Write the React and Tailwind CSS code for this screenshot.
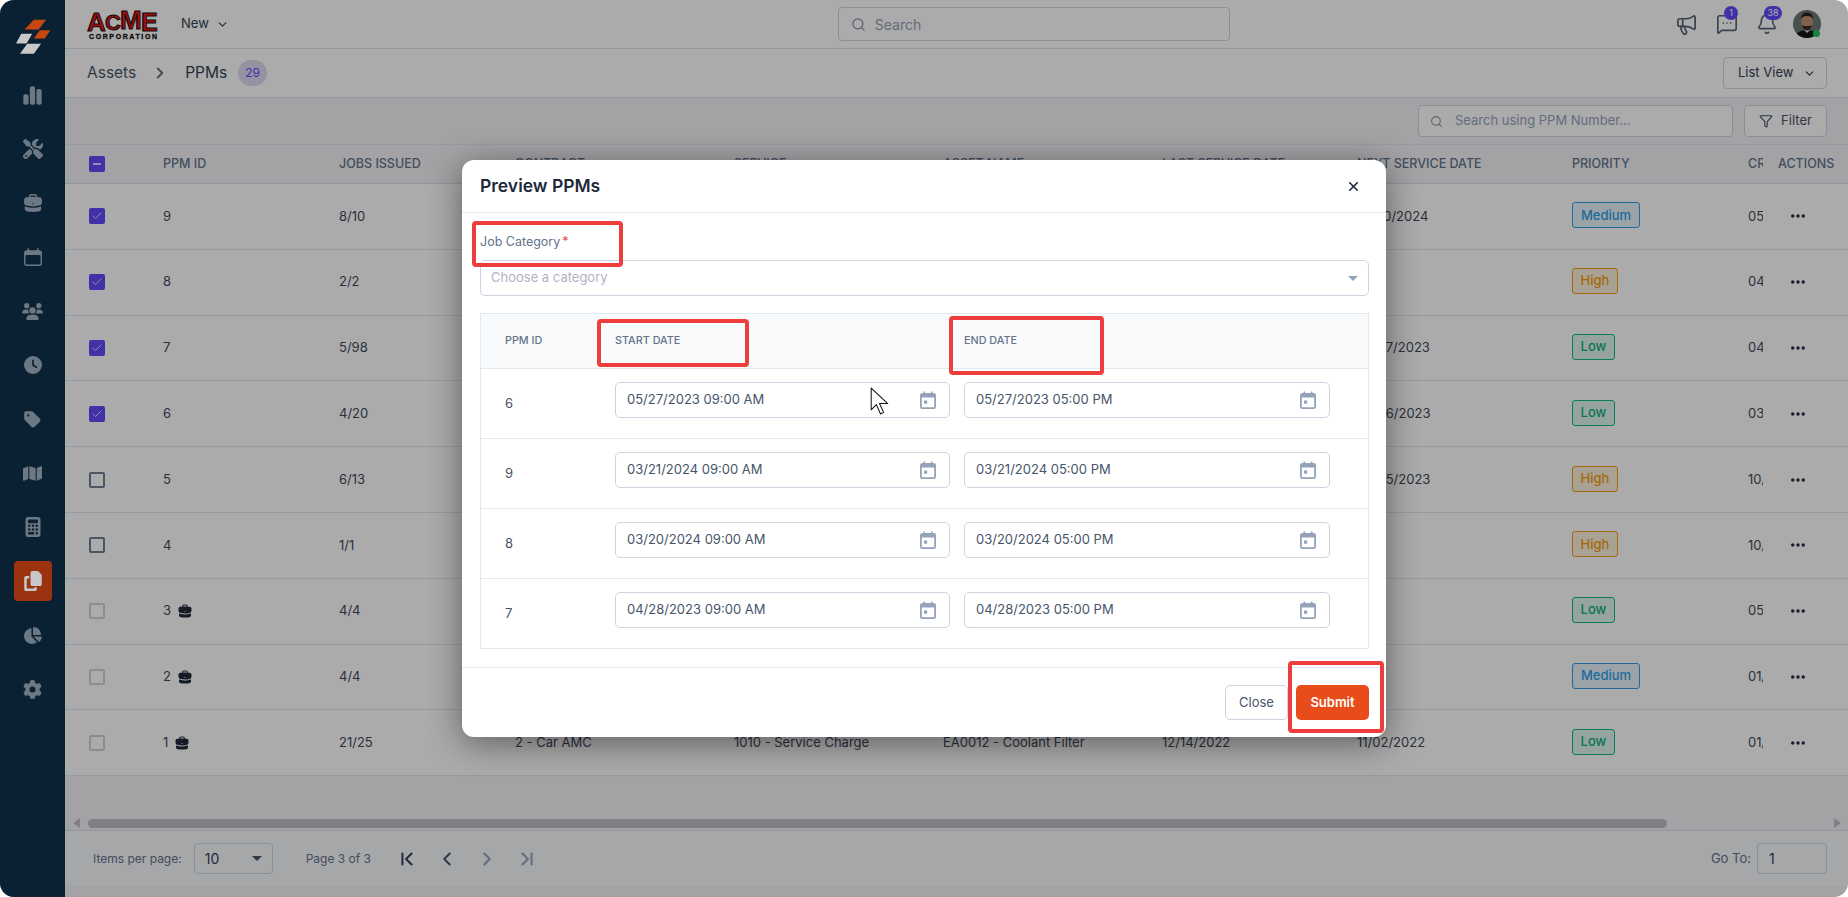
import React from "react";
import { Search, ChevronDown, ChevronRight, ChevronLeft, ChevronFirst, ChevronLast, Megaphone, MessageSquareMore, Bell, Funnel, Ellipsis, X, Check, Minus } from "lucide-react";
import { FaChartSimple, FaScrewdriverWrench, FaUsers, FaClock, FaTag, FaMap, FaCalculator, FaCopy, FaChartPie, FaGear } from "react-icons/fa6";
import { HiBriefcase, HiCalendar } from "react-icons/hi2";

const navItems = [
  { icon: FaChartSimple, size: 21 },
  { icon: FaScrewdriverWrench, size: 20 },
  { icon: HiBriefcase, size: 22 },
  { icon: HiCalendar, size: 22 },
  { icon: FaUsers, size: 21 },
  { icon: FaClock, size: 18 },
  { icon: FaTag, size: 19 },
  { icon: FaMap, size: 19 },
  { icon: FaCalculator, size: 20 },
  { icon: FaCopy, size: 20, active: true },
  { icon: FaChartPie, size: 19 },
  { icon: FaGear, size: 19 },
];

const rows = [
  { id: "9", jobs: "8/10", next: "03/10/2024", priority: "Medium", created: "05/10/2023", check: "on" },
  { id: "8", jobs: "2/2", next: "", priority: "High", created: "04/28/2023", check: "on" },
  { id: "7", jobs: "5/98", next: "05/27/2023", priority: "Low", created: "04/28/2023", check: "on" },
  { id: "6", jobs: "4/20", next: "05/26/2023", priority: "Low", created: "03/20/2023", check: "on" },
  { id: "5", jobs: "6/13", next: "05/25/2023", priority: "High", created: "10/20/2022", check: "off" },
  { id: "4", jobs: "1/1", next: "", priority: "High", created: "10/20/2022", check: "off" },
  { id: "3", jobs: "4/4", next: "", priority: "Low", created: "05/12/2022", check: "disabled", job: true },
  { id: "2", jobs: "4/4", next: "", priority: "Medium", created: "01/12/2022", check: "disabled", job: true },
  {
    id: "1",
    jobs: "21/25",
    contract: "2 - Car AMC",
    service: "1010 - Service Charge",
    asset: "EA0012 - Coolant Filter",
    last: "12/14/2022",
    next: "11/02/2022",
    priority: "Low",
    created: "01/12/2022",
    check: "disabled",
    job: true,
  },
];

const previewRows = [
  { id: "6", start: "05/27/2023 09:00 AM", end: "05/27/2023 05:00 PM" },
  { id: "9", start: "03/21/2024 09:00 AM", end: "03/21/2024 05:00 PM" },
  { id: "8", start: "03/20/2024 09:00 AM", end: "03/20/2024 05:00 PM" },
  { id: "7", start: "04/28/2023 09:00 AM", end: "04/28/2023 05:00 PM" },
];

const tableCols = "grid grid-cols-[74px_176px_176px_219px_209px_219px_195px_215px_176px_30px_1fr] items-center pl-[24px]";

const priorityStyles = {
  Medium: "w-[68px] border-[#2f9fe8] bg-[#e6f3fb] text-[#2f9fe8]",
  High: "w-[46px] border-[#f59e0b] bg-[#fdf0dc] text-[#f59e0b]",
  Low: "w-[43px] border-[#12b886] bg-[#e0f5ee] text-[#0fae7e]",
};

// sits above the dim layer, the reference keeps it brighter than the rest
const Logo = () => (
  <svg viewBox="40 50 115 112" className="relative z-10 w-[38px] h-[37px]">
    <polygon points="100,55 137,55 115,85 72,85" fill="#c6470f" />
    <polygon points="118,87 150,87 133,112 100,112" fill="#c6470f" />
    <polygon points="62,98 95,98 78,127 46,127" fill="#c9c9c9" />
    <polygon points="80,128 122,128 100,158 58,158" fill="#c9c9c9" />
  </svg>
);

const acmeLetters = [
  { ch: "A", x: 0, y: 23, size: 26 },
  { ch: "C", x: 18, y: 22, size: 22 },
  { ch: "M", x: 33, y: 21, size: 26 },
  { ch: "E", x: 54, y: 23, size: 25 },
];

const AcmeLogo = () => (
  <svg viewBox="0 0 72 32" className="w-[72px] h-[32px]">
    {acmeLetters.map((l) => (
      <text key={l.ch} x={l.x} y={l.y} fill="#ee1414" stroke="#111" strokeWidth="1" fontFamily="Liberation Sans" fontWeight="700" fontSize={l.size}>{l.ch}</text>
    ))}
    <text x="2" y="31" textLength="68" lengthAdjust="spacing" fill="#111" stroke="#111" strokeWidth="0.3" fontFamily="Liberation Sans" fontWeight="700" fontSize="7">CORPORATION</text>
  </svg>
);

const Avatar = () => (
  <svg viewBox="0 0 28 28" className="w-[28px] h-[28px] rounded-full">
    <rect width="28" height="28" fill="#6d7a72" />
    <path d="M2 28c1-6 6-8 12-8s11 2 12 8z" fill="#14161a" />
    <path d="M11 20l3 3 3-3-3-1z" fill="#dfe0e0" />
    <ellipse cx="14" cy="12" rx="6" ry="7.5" fill="#c08f72" />
    <path d="M8 9c0-5 3-6.500 6-6.500S20 4 20 9c-1-2-3-3-6-3s-5 1-6 3z" fill="#2a211c" />
    <path d="M9 15c1 4 3 5.500 5 5.500s4-1.500 5-5.500c-1 1-3 1-5 1s-4 0-5-1z" fill="#3d2e26" />
  </svg>
);

const CalendarIcon = () => (
  <svg viewBox="0 0 16 18" className="w-[16px] h-[18px] text-[#94a3b8]" fill="none">
    <rect x="0.9" y="2.9" width="14.2" height="14.2" rx="1.4" stroke="currentColor" strokeWidth="1.8" />
    <rect x="1" y="3" width="14" height="3.500" fill="currentColor" />
    <rect x="3.500" y="0.5" width="1.600" height="3" fill="currentColor" />
    <rect x="10.900" y="0.5" width="1.600" height="3" fill="currentColor" />
    <rect x="4" y="9.500" width="3.200" height="3.200" fill="currentColor" />
  </svg>
);

const Cursor = () => (
  <svg viewBox="0 0 19 28" className="absolute left-[408px] top-[227px] w-[20px] h-[29px]">
    <path d="M1 1v21l5-5 4 9 3-1.500-4-8.500h8z" fill="#fff" stroke="#111" strokeWidth="1" strokeLinejoin="round" />
  </svg>
);

const RowCheckbox = ({ state }) => {
  if (state === "on") {
    return (
      <span className="w-[16px] h-[16px] rounded-[2px] bg-[#6149fb] flex items-center justify-center">
        <Check size={12} strokeWidth={1.5} className="text-white" />
      </span>
    );
  }
  if (state === "off") {
    return <span className="block w-[16px] h-[16px] rounded-[2px] border-2 border-[#708096]" />;
  }
  return <span className="block w-[16px] h-[16px] rounded-[2px] border-2 border-[#cfd1d4]" />;
};

const Sidebar = () => (
  <aside className="w-[65px] shrink-0 bg-[#0f324c] flex flex-col items-center pt-[18px]">
    <Logo />
    <div className="flex flex-col items-center mt-[13px]">
      {navItems.map(({ icon: Icon, size, active }, i) => (
        <div
          key={i}
          className={`w-[38px] flex items-center justify-center ${active ? "h-[40px] my-[7px] rounded-[4px] bg-[#e84c1a] text-[#c8c8c8]" : "h-[54px] text-[#a2b4c4]"}`}
        >
          <Icon size={size} className={active ? "relative z-10" : ""} />
        </div>
      ))}
    </div>
  </aside>
);

const TopBar = () => (
  <header className="h-[49px] shrink-0 bg-white border-b border-[#dbe2ee] flex items-center pl-[22px] pr-[27px]">
    <AcmeLogo />
    <button className="ml-[22px] flex items-center gap-[7px] text-[13px] text-[#334155]">
      New
      <ChevronDown size={13} />
    </button>
    <div className="ml-[609px] w-[392px] h-[34px] border border-[#cbd5e1] rounded-[4px] flex items-center pl-[12px] text-[14px] text-[#94a3b8]">
      <Search size={15} className="text-[#8492a6]" />
      <span className="ml-[9px]">Search</span>
    </div>
    <div className="ml-auto flex items-center">
      <Megaphone size={23} strokeWidth={1.8} className="text-[#556479]" />
      <div className="relative ml-[18px]">
        <MessageSquareMore size={22} strokeWidth={1.8} className="text-[#556479]" />
        <span className="absolute -top-[7px] left-[8px] w-[14px] h-[14px] rounded-full bg-[#6149fb] text-white text-[9px] flex items-center justify-center">1</span>
      </div>
      <div className="relative ml-[18px]">
        <Bell size={22} strokeWidth={1.8} className="text-[#556479]" />
        <span className="absolute -top-[7px] left-[8px] w-[18px] h-[14px] rounded-full bg-[#6149fb] text-white text-[9px] flex items-center justify-center">38</span>
      </div>
      <div className="relative ml-[15px]">
        <Avatar />
        <span className="absolute left-[20px] top-[20px] w-[7px] h-[7px] rounded-full bg-[#22c55e]" />
      </div>
    </div>
  </header>
);

const Breadcrumb = () => (
  <div className="h-[49px] shrink-0 bg-white border-b border-[#e2e8f0] flex items-center pl-[22px] pr-[21px]">
    <span className="text-[15.5px] text-[#475569]">Assets</span>
    <ChevronRight size={18} strokeWidth={2.6} className="ml-[15px] text-[#64748b]" />
    <span className="ml-[16px] text-[15.5px] text-[#334155]">PPMs</span>
    <span className="ml-[11px] w-[29px] h-[26px] rounded-full bg-[#dddcf2] text-[#6149fb] text-[12px] flex items-center justify-center">29</span>
    <button className="ml-auto w-[104px] h-[32px] border border-[#cbd5e1] rounded-[4px] flex items-center pl-[14px] gap-[10px] text-[13px] text-[#334155]">
      List View
      <ChevronDown size={13} strokeWidth={2.4} />
    </button>
  </div>
);

const Toolbar = () => (
  <div className="h-[47px] shrink-0 flex items-center justify-end gap-[11px] pr-[21px] border-b border-[#e2e8f0]">
    <div className="w-[315px] h-[32px] border border-[#cbd5e1] rounded-[4px] flex items-center pl-[11px] text-[13px] text-[#94a3b8] bg-white">
      <Search size={13} className="text-[#8492a6]" />
      <span className="ml-[12px]">Search using PPM Number...</span>
    </div>
    <button className="w-[83px] h-[32px] border border-[#cbd5e1] rounded-[4px] flex items-center justify-center gap-[8px] text-[13px] text-[#475569] bg-white">
      <Funnel size={14} />
      Filter
    </button>
  </div>
);

const PpmTable = () => (
  <div className="bg-white">
    <div className={`${tableCols} h-[39px] bg-[#f3f4f6] border-b border-[#d9dee8] text-[12.5px] font-medium text-[#64748b] whitespace-nowrap`}>
      <span className="w-[16px] h-[16px] rounded-[2px] bg-[#6149fb] flex items-center justify-center">
        <Minus size={12} strokeWidth={3} className="text-white" />
      </span>
      <span>PPM ID</span>
      <span>JOBS ISSUED</span>
      <span>CONTRACT</span>
      <span>SERVICE</span>
      <span>ASSET NAME</span>
      <span>LAST SERVICE DATE</span>
      <span>NEXT SERVICE DATE</span>
      <span>PRIORITY</span>
      <span className="w-[15px] overflow-hidden">CREATED</span>
      <span>ACTIONS</span>
    </div>
    {rows.map((r) => (
      <div key={r.id} className={`${tableCols} h-[65.8px] border-b border-[#e2e6ef] text-[13px] text-[#3f4a5c] whitespace-nowrap`}>
        <RowCheckbox state={r.check} />
        <span className="flex items-center gap-[6px]">
          {r.id}
          {r.job && <HiBriefcase size={16} className="text-[#1e293b]" />}
        </span>
        <span>{r.jobs}</span>
        <span>{r.contract}</span>
        <span>{r.service}</span>
        <span>{r.asset}</span>
        <span>{r.last}</span>
        <span>{r.next}</span>
        <span>
          <span className={`h-[26px] mb-[2px] rounded-[3px] border flex items-center justify-center font-medium ${priorityStyles[r.priority]}`}>{r.priority}</span>
        </span>
        <span className="w-[15px] overflow-hidden">{r.created}</span>
        <span className="pl-[11px]">
          <Ellipsis size={18} strokeWidth={2.6} className="text-[#1e293b]" />
        </span>
      </div>
    ))}
  </div>
);

const ScrollBar = () => (
  <div className="h-[15px] flex items-center pl-[8px] pr-[7px] mt-[40px] border-b border-[#d9dee8]">
    <span className="w-0 h-0 border-y-[5px] border-y-transparent border-r-[7px] border-r-[#c0bfc6]" />
    <span className="ml-[8px] w-[1579px] h-[9px] rounded-full bg-[#bfbec6]" />
    <span className="ml-auto w-0 h-0 border-y-[5px] border-y-transparent border-l-[7px] border-l-[#c0bfc6]" />
  </div>
);

const Pagination = () => (
  <div className="h-[55px] shrink-0 bg-[#f8f9fb] flex items-center pl-[28px] pr-[21px] text-[12px] text-[#64748b]">
    <span>Items per page:</span>
    <div className="ml-[12px] w-[79px] h-[31px] border border-[#cbd5e1] rounded-[4px] flex items-center justify-between pl-[10px] pr-[10px] text-[14px] text-[#334155]">
      10
      <span className="w-0 h-0 border-x-[5px] border-x-transparent border-t-[5px] border-t-[#475569]" />
    </div>
    <span className="ml-[33px]">Page 3 of 3</span>
    <div className="ml-[25px] flex items-center gap-[18px] text-[#475569]">
      <ChevronFirst size={22} strokeWidth={2.2} className="text-[#334155]" />
      <ChevronLeft size={22} strokeWidth={2.2} />
      <ChevronRight size={22} strokeWidth={2.2} className="text-[#94a3b8]" />
      <ChevronLast size={22} strokeWidth={2.2} className="text-[#94a3b8]" />
    </div>
    <span className="ml-auto text-[13px]">Go To:</span>
    <div className="ml-[6px] w-[70px] h-[31px] border border-[#cbd5e1] rounded-[4px] flex items-center pl-[11px] text-[14px] text-[#334155]">1</div>
  </div>
);

const DateField = ({ value, className }) => (
  <div className={`h-[36px] -mt-[7px] border border-[#cbd5e1] rounded-[5px] flex items-center justify-between pl-[11px] pr-[13px] text-[13px] text-[#475569] ${className}`}>
    {value}
    <CalendarIcon />
  </div>
);

const PreviewModal = () => (
  <div className="relative w-[924px] h-[577px] bg-white rounded-[12px] shadow-[0_6px_34px_rgba(0,0,0,0.45)] flex flex-col">
    <div className="h-[53px] shrink-0 border-b border-[#e2e8f0] flex items-center justify-between pl-[18px] pr-[25px]">
      <h2 className="text-[17.5px] font-semibold text-[#1e293b]">Preview PPMs</h2>
      <X size={15} strokeWidth={2.6} className="text-[#1e293b]" />
    </div>
    <div className="pl-[18px] pr-[17px] pt-[20px] flex-1">
      <div className="h-[18px] flex items-center text-[12.5px] text-[#64748b]">
        Job Category<span className="ml-[2px] text-[#ef4444]">*</span>
      </div>
      <div className="mt-[9px] h-[36px] border border-[#cbd5e1] rounded-[5px] flex items-center justify-between pl-[10px] pr-[10px] text-[13px] text-[#b4b2c6]">
        Choose a category
        <span className="w-0 h-0 border-x-[5px] border-x-transparent border-t-[5px] border-t-[#94a3b8]" />
      </div>
      <div className="mt-[17px] border border-[#e2e8f0]">
        <div className="grid grid-cols-[134px_349px_1fr] items-center h-[55px] bg-[#f8fafc] border-b border-[#e2e8f0] text-[10.8px] font-medium text-[#64748b]">
          <span className="pl-[24px]">PPM ID</span>
          <span>START DATE</span>
          <span>END DATE</span>
        </div>
        {previewRows.map((r, i) => (
          <div key={r.id} className={`grid grid-cols-[134px_349px_1fr] items-center ${i < 3 ? "h-[70px] border-b border-[#e2e8f0]" : "h-[69px]"}`}>
            <span className="pl-[24px] text-[13px] text-[#475569]">{r.id}</span>
            <DateField value={r.start} className="w-[335px]" />
            <DateField value={r.end} className="w-[366px]" />
          </div>
        ))}
      </div>
    </div>
    <div className="h-[70px] shrink-0 border-t border-[#e2e8f0] flex justify-end gap-[8px] pt-[17px] pr-[17px]">
      <button className="w-[63px] h-[35px] border border-[#cbd5e1] rounded-[5px] text-[13px] text-[#475569]">Close</button>
      <button className="w-[73px] h-[35px] rounded-[5px] bg-[#e84c1a] text-[13px] font-semibold text-white">Submit</button>
    </div>

    {/* red annotation boxes from the screenshot */}
    <span className="absolute left-[10px] top-[61px] w-[151px] h-[46px] border-4 border-[#ee3d3d] rounded-[4px]" />
    <span className="absolute left-[135px] top-[159px] w-[152px] h-[48px] border-4 border-[#ee3d3d] rounded-[4px]" />
    <span className="absolute left-[487px] top-[156px] w-[155px] h-[59px] border-4 border-[#ee3d3d] rounded-[4px]" />
    <span className="absolute left-[826px] top-[501px] w-[96px] h-[72px] border-4 border-[#ee3d3d] rounded-[4px]" />
    <Cursor />
  </div>
);

export default function App() {
  return (
    <div className="relative w-screen h-screen overflow-hidden bg-white font-[Inter,sans-serif]">
      <div className="relative w-full h-full flex overflow-hidden rounded-[14px] bg-[#f3f4f6]">
        <Sidebar />
        <main className="flex-1 min-w-0 flex flex-col">
          <TopBar />
          <Breadcrumb />
          <Toolbar />
          <PpmTable />
          <ScrollBar />
          <Pagination />
        </main>
        <div className="absolute inset-0 bg-black/33" />
      </div>
      <div className="absolute inset-0 flex items-center justify-center">
        <PreviewModal />
      </div>
    </div>
  );
}
